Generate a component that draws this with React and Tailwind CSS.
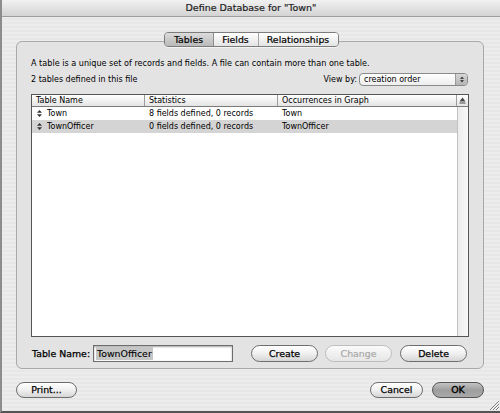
import React from "react";

function UpDown({ color = "#333", w = 5, h = 7 }) {
  return (
    <svg width={w} height={h} viewBox="0 0 5 7" className="shrink-0">
      <path d="M2.5 0 L5 2.7 L0 2.7 Z M0 4.3 L5 4.3 L2.5 7 Z" fill={color} />
    </svg>
  );
}

function SortUp() {
  return (
    <svg width="7" height="7" viewBox="0 0 7 7">
      <path d="M3.5 0.5 L6.5 4.5 L0.5 4.5 Z" fill="#444" />
      <rect x="0.5" y="5.5" width="6" height="1" fill="#444" />
    </svg>
  );
}

function Grip() {
  return (
    <svg width="10" height="10" viewBox="0 0 10 10">
      <path d="M10 1 L1 10 M10 4 L4 10 M10 7 L7 10" stroke="#7a7a7a" strokeWidth="1" />
      <path d="M10 2 L2 10 M10 5 L5 10 M10 8 L8 10" stroke="#fafafa" strokeWidth="1" />
    </svg>
  );
}

export default function App() {
  return (
    <div className="relative w-[500px] h-[413px] overflow-hidden flex flex-col bg-[#ebebeb] bg-[repeating-linear-gradient(180deg,#ececec_0px,#ececec_2px,#e7e7e7_2px,#e7e7e7_4px)] border-l-2 border-l-[#8c8c8c] border-b-2 border-b-[#555555] text-black [font-family:'DejaVu_Sans','Liberation_Sans',sans-serif]">
      {/* Title bar */}
      <div className="h-[17px] shrink-0 flex items-center justify-center bg-gradient-to-b from-[#f1f1f1] to-[#d3d3d3] border-b border-b-[#9c9c9c] text-[9.5px] text-[#1e1e1e] leading-none [-webkit-text-stroke:0.2px_#1e1e1e]">
        Define Database for "Town"
      </div>

      {/* Body */}
      <div className="flex-1 flex flex-col pl-[14px] pr-[16px] pt-[15px]">
        {/* Segmented tabs */}
        <div className="relative z-10 flex justify-center -mb-[6px] pl-[2px]">
          <div className="flex h-[15px] rounded-[4px] border border-[#7c7c7c] overflow-hidden text-[9.4px] leading-none shadow-[0_1px_0_rgba(255,255,255,0.6)] [-webkit-text-stroke:0.2px_#000]">
            <div className="w-[49px] flex items-center justify-center bg-gradient-to-b from-[#dcdcdc] to-[#b9b9b9] border-r border-r-[#8e8e8e]">
              Tables
            </div>
            <div className="w-[45px] flex items-center justify-center bg-gradient-to-b from-[#ffffff] to-[#e4e4e4] border-r border-r-[#a4a4a4]">
              Fields
            </div>
            <div className="w-[79px] flex items-center justify-center bg-gradient-to-b from-[#ffffff] to-[#e4e4e4]">
              Relationships
            </div>
          </div>
        </div>

        {/* Group box */}
        <div className="h-[328px] shrink-0 flex flex-col rounded-[6px] border border-[#a9a9a9] bg-[#e3e3e3] pt-[16px] pl-[14px] pr-[14px]">
          <div className="h-[10px] text-[8.1px] leading-[10px] whitespace-nowrap">
            A table is a unique set of records and fields. A file can contain more than one table.
          </div>

          <div className="mt-[5px] h-[13px] flex items-center justify-between text-[8px] leading-none">
            <span>2 tables defined in this file</span>
            <div className="flex items-center mr-[1px]">
              <span className="mr-[2px]">View by:</span>
              <div className="w-[109px] h-[13px] flex rounded-[4px] border border-[#8a8a8a] overflow-hidden bg-gradient-to-b from-[#ffffff] to-[#eeeeee]">
                <div className="flex-1 flex items-center pl-[4px]">creation order</div>
                <div className="w-[12px] flex items-center justify-center bg-gradient-to-b from-[#d6d6d6] to-[#b4b4b4] border-l border-l-[#9a9a9a]">
                  <UpDown color="#222" w={4} h={7} />
                </div>
              </div>
            </div>
          </div>

          {/* Table */}
          <div className="mt-[8px] h-[243px] flex flex-col border border-[#555555] bg-white text-[8px] leading-none">
            <div className="h-[12px] shrink-0 flex bg-gradient-to-b from-[#ffffff] to-[#e4e4e4] border-b border-b-[#7a7a7a]">
              <div className="w-[113px] flex items-center pl-[4px] border-r border-r-[#9c9c9c]">Table Name</div>
              <div className="w-[133px] flex items-center pl-[4px] border-r border-r-[#9c9c9c]">Statistics</div>
              <div className="w-[179px] flex items-center pl-[4px] border-r border-r-[#9c9c9c]">Occurrences in Graph</div>
              <div className="w-[11px] flex items-center justify-center">
                <SortUp />
              </div>
            </div>
            <div className="flex-1 flex">
              <div className="w-[425px] flex flex-col">
                <div className="h-[13px] flex items-center">
                  <div className="w-[113px] flex items-center gap-[5px] pl-[5px]">
                    <UpDown />
                    <span>Town</span>
                  </div>
                  <div className="w-[133px] pl-[4px]">8 fields defined, 0 records</div>
                  <div className="w-[179px] pl-[4px]">Town</div>
                </div>
                <div className="h-[13px] flex items-center bg-[#d4d4d4]">
                  <div className="w-[113px] flex items-center gap-[5px] pl-[5px]">
                    <UpDown />
                    <span>TownOfficer</span>
                  </div>
                  <div className="w-[133px] pl-[4px]">0 fields defined, 0 records</div>
                  <div className="w-[179px] pl-[4px]">TownOfficer</div>
                </div>
              </div>
              <div className="w-[11px] border-l border-l-[#c2c2c2] bg-gradient-to-r from-[#ececec] to-[#f8f8f8]"></div>
            </div>
          </div>

          {/* Bottom row */}
          <div className="mt-[8px] h-[17px] flex items-center text-[9.4px] leading-none [-webkit-text-stroke:0.25px_#000]">
            <span className="pl-[1px]">Table Name:</span>
            <div className="ml-[3px] w-[140px] h-[17px] flex items-center border border-[#6c6c6c] bg-white shadow-[inset_0_1px_2px_rgba(0,0,0,0.35)] pl-[2px] [-webkit-text-stroke:0.1px_#000]">
              <span className="bg-[#c6c6c6] px-[1px] py-[2px]">TownOfficer</span>
            </div>
            <div className="ml-[18px] w-[67px] h-[17px] flex items-center justify-center rounded-full border border-[#6e6e6e] bg-gradient-to-b from-[#ffffff] via-[#f0f0f0] to-[#d6d6d6]">
              Create
            </div>
            <div className="ml-[7px] w-[67px] h-[17px] flex items-center justify-center rounded-full border border-[#bdbdbd] bg-gradient-to-b from-[#fbfbfb] to-[#e6e6e6] text-[#a9a9a9] [-webkit-text-stroke:0.2px_#a9a9a9]">
              Change
            </div>
            <div className="ml-[8px] w-[67px] h-[17px] flex items-center justify-center rounded-full border border-[#6e6e6e] bg-gradient-to-b from-[#ffffff] via-[#f0f0f0] to-[#d6d6d6]">
              Delete
            </div>
          </div>
        </div>

        {/* Footer buttons */}
        <div className="mt-[13px] flex items-center text-[9.4px] leading-none [-webkit-text-stroke:0.25px_#000]">
          <div className="w-[61px] h-[16px] flex items-center justify-center rounded-full border border-[#6e6e6e] bg-gradient-to-b from-[#ffffff] via-[#f0f0f0] to-[#d6d6d6]">
            Print...
          </div>
          <div className="ml-auto w-[53px] h-[16px] flex items-center justify-center rounded-full border border-[#6e6e6e] bg-gradient-to-b from-[#ffffff] via-[#f0f0f0] to-[#d6d6d6]">
            Cancel
          </div>
          <div className="ml-[9px] w-[52px] h-[16px] flex items-center justify-center rounded-full border border-[#555555] bg-gradient-to-b from-[#c4c4c4] via-[#9e9e9e] to-[#a8a8a8] [-webkit-text-stroke:0.35px_#000]">
            OK
          </div>
        </div>
      </div>

      <div className="absolute right-[1px] bottom-[1px]">
        <Grip />
      </div>
    </div>
  );
}
